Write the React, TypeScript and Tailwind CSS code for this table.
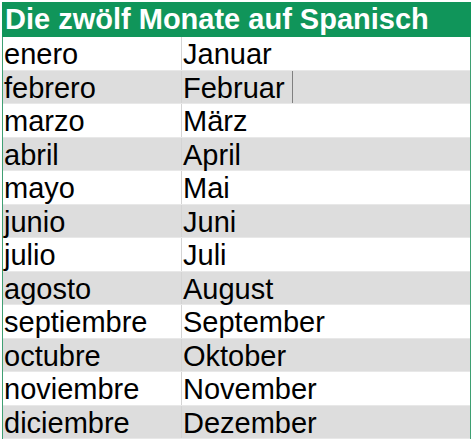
const months: [string, string][] = [
  ["enero", "Januar"],
  ["febrero", "Februar"],
  ["marzo", "März"],
  ["abril", "April"],
  ["mayo", "Mai"],
  ["junio", "Juni"],
  ["julio", "Juli"],
  ["agosto", "August"],
  ["septiembre", "September"],
  ["octubre", "Oktober"],
  ["noviembre", "November"],
  ["diciembre", "Dezember"],
];

const App = () => {
  return (
    <div className="w-[474px] h-[443px] bg-white pt-[2px] pl-[2px] font-['Liberation_Sans',Arial,sans-serif] overflow-hidden">
      <div className="w-[469px] border-l border-r border-[#3f9f72]">
        <div className="h-[35px] bg-[#10955a] text-white font-bold text-[29px] leading-[35px] -mx-px px-[3px] whitespace-nowrap">
          Die zwölf Monate auf Spanisch
        </div>
        {months.map(([es, de], i) => (
          <div
            key={es}
            className={
              i % 2 === 1
                ? "flex h-[33.5px] bg-[#dddddd] border-b border-[#e8e8e8] text-[29px] leading-[34px] text-black"
                : "flex h-[33.5px] bg-white border-b border-[#e8e8e8] text-[29px] leading-[34px] text-black"
            }
          >
            <div className="w-[179px] pl-[1px] border-r border-[#d4d4d4] whitespace-nowrap">{es}</div>
            {i === 1 ? (
              <div className="w-[111px] pl-[1px] border-r border-[#808080]">{de}</div>
            ) : (
              <div className="flex-1 pl-[1px]">{de}</div>
            )}
          </div>
        ))}
      </div>
    </div>
  );
};

export default App;
